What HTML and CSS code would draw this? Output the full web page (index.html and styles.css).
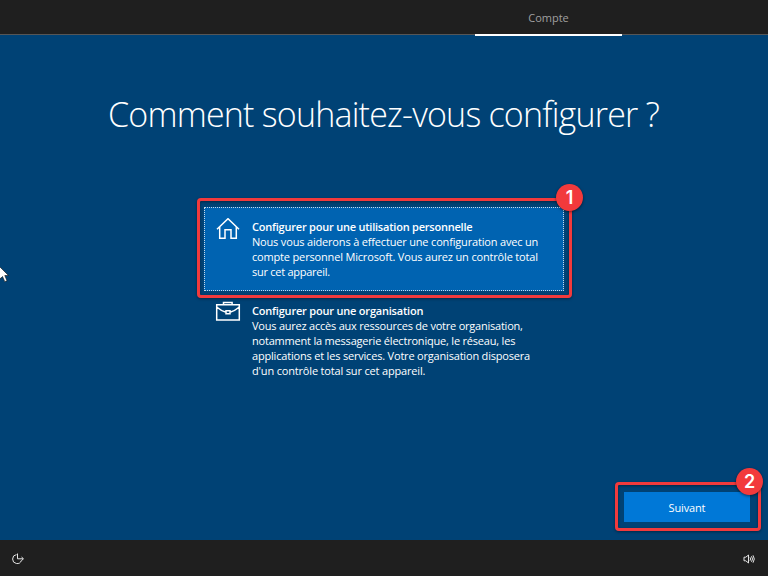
FILE: index.html
```html
<!DOCTYPE html>
<html lang="fr">
<head>
<meta charset="utf-8">
<title>Compte</title>
<link rel="stylesheet" href="styles.css">
</head>
<body>
<header class="topbar"><div class="tab">Compte</div></header>
<main class="content">
  <h1 class="title">Comment souhaitez-vous configurer ?</h1>
  <section class="options">
    <div class="option selected">
      <svg class="icon" width="24" height="24" viewBox="0 0 24 24"><path d="M1 11.2 12 .7l11 10.5M3.7 8.8v11.5H9v-8.6h6v8.6h5.3V8.8"/></svg>
      <div class="copy">
        <strong class="p0">Configurer pour une utilisation personnelle</strong>
        <span class="p1">Nous vous aiderons à effectuer une configuration avec un</span>
        <span class="p2">compte personnel Microsoft. Vous aurez un contrôle total</span>
        <span class="p3">sur cet appareil.</span>
      </div>
      <div class="frame frame-option"><b class="badge">1</b></div>
    </div>
    <div class="option work">
      <svg class="icon" width="26" height="24" viewBox="0 0 26 24"><path d="M1.7 3.7h22.6v15.4H1.7zM8.5 3.5V1.6h8.6v1.9M2 6.3q4 3.6 9 4.9M24 6.3q-4 3.6-9 4.9M11 9.8h4v3h-4z"/></svg>
      <div class="copy">
        <strong class="o0">Configurer pour une organisation</strong>
        <span class="o1">Vous aurez accès aux ressources de votre organisation,</span>
        <span class="o2">notamment la messagerie électronique, le réseau, les</span>
        <span class="o3">applications et les services. Votre organisation disposera</span>
        <span class="o4">d'un contrôle total sur cet appareil.</span>
      </div>
    </div>
  </section>
  <div class="actions">
    <button class="next">Suivant</button>
    <div class="frame frame-next"><b class="badge">2</b></div>
  </div>
  <svg class="cursor" width="14" height="20" viewBox="0 0 14 20"><path d="M-3-2 8.5 9.5H4.8L7 14.8l-2.2.9-2.3-5.2L0 13z"/></svg>
</main>
<footer class="bottombar">
  <svg class="ease" width="14" height="14" viewBox="0 0 14 14"><path d="M5.5 2.6A4.5 4.5 0 1 0 10.4 8.4M6.5 1.5v5.3H12M10.5 5l2 1.8-2 1.8"/></svg>
  <svg class="sound" width="12" height="12" viewBox="0 0 12 12"><path d="M1 4.2h1.8L5.5 2v8L2.8 7.8H1zM7 4.3q1.2 1.7 0 3.4M8.5 3.2q2 2.8 0 5.6M10 2.3q2.6 3.7 0 7.4"/></svg>
</footer>
</body>
</html>
```

FILE: styles.css
```css
* { box-sizing: border-box; }
body {
  margin: 0;
  width: 768px;
  height: 576px;
  overflow: hidden;
  display: flex;
  flex-direction: column;
  background: #004275;
  color: #fff;
  font: 11px/15px "Open Sans", "Noto Sans", sans-serif;
}
.topbar {
  height: 35px;
  margin-bottom: 1px;
  flex: none;
  background: #1f1f1f;
  border-bottom: 1px solid #565656;
  padding-left: 475px;
}
.tab {
  width: 147px;
  height: 36px;
  border-bottom: 2px solid #fff;
  text-align: center;
  line-height: 36px;
  color: #a0a0a0;
}
.content { position: relative; height: 504px; flex: none; }
.title {
  margin: 0;
  padding: 54px 0 0 108px;
  height: 171px;
  font-size: 34px;
  line-height: 48px;
  font-weight: 300;
  letter-spacing: -.79px;
  white-space: nowrap;
}
.options { width: 360px; margin-left: 204px; }
.option {
  position: relative;
  display: flex;
  height: 84px;
  padding: 12px 0 0 12px;
}
.selected { background: #0063b1; outline: 1px dotted #c7d8e7; outline-offset: -1px; }
.icon { flex: none; fill: none; stroke: #fff; stroke-width: 1.5; margin-top: -1px; }
.work .icon { margin-left: -1px; margin-top: -2px; }
.copy { margin-left: 12px; }
.work .copy { margin-left: 11px; }
.copy strong, .copy span { display: block; white-space: nowrap; width: max-content; }
.copy strong { font-weight: 600; }
.p0 { letter-spacing: -.22px; }
.p1 { letter-spacing: -.175px; }
.p2 { letter-spacing: -.17px; }
.p3 { letter-spacing: -.27px; }
.o0 { letter-spacing: -.2px; }
.o1 { letter-spacing: -.225px; }
.o2 { letter-spacing: -.2px; }
.o3 { letter-spacing: -.19px; }
.o4 { letter-spacing: -.17px; }
.frame {
  position: absolute;
  border: 3px solid #f23a3c;
  border-radius: 4px;
  box-shadow: 0 1px 3px #0006, inset 0 1px 3px #0006;
}
.frame-option { left: -7px; top: -9px; width: 375px; height: 100px; }
.frame-next { left: 615px; top: 446px; width: 146px; height: 49px; }
.badge {
  position: absolute;
  right: -14px;
  top: -17px;
  width: 27px;
  height: 27px;
  border-radius: 50%;
  background: #f23a3c;
  box-shadow: 0 1px 3px #0008;
  text-align: center;
  font: 600 18px/27px Inter, sans-serif;
}
.frame-next .badge { right: -5px; }
.actions { display: flex; padding: 117px 0 0 624px; }
.next {
  width: 126px;
  height: 30px;
  padding: 0;
  border: 0;
  background: #0078d7;
  color: #fff;
  font: inherit;
  letter-spacing: -.15px;
}
.cursor { position: absolute; left: 0; top: 230px; fill: #fff; stroke: #111; stroke-width: .6; }
.bottombar {
  height: 36px;
  flex: none;
  background: #1f1f1f;
  display: flex;
  align-items: center;
  justify-content: space-between;
  padding: 2px 13px 0 11px;
}
.bottombar svg { fill: none; stroke: #e4e4e4; stroke-width: 1; }
```
